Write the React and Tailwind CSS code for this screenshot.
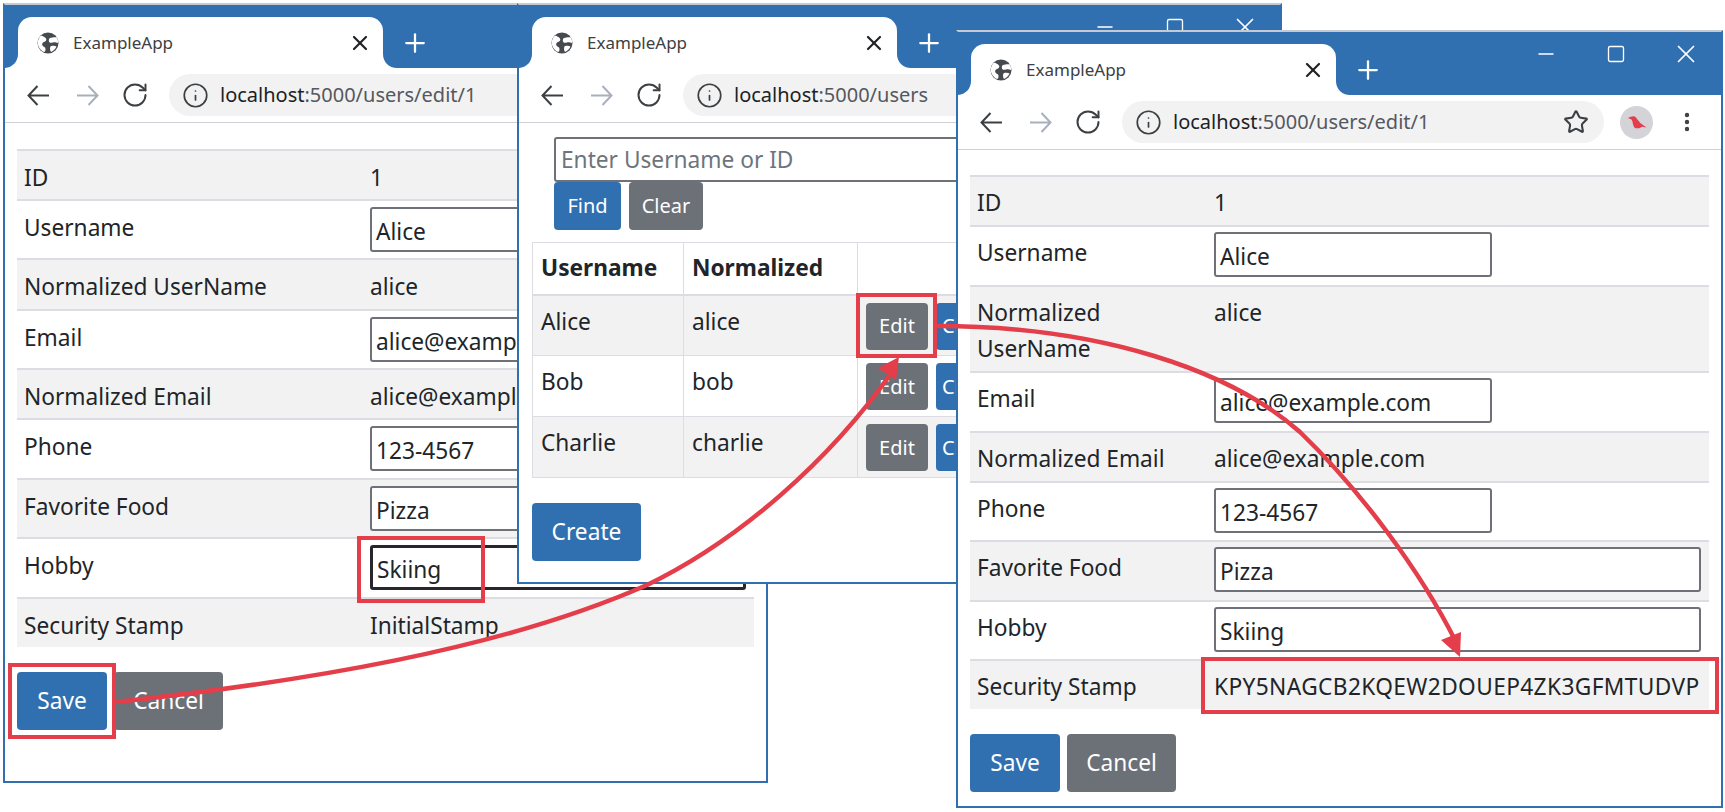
import { RotateCw, Info, Star, X, Plus, Minus, Square, MoreVertical } from "lucide-react";

function GlobeIcon() {
  return (
    <svg width="24" height="24" viewBox="0 0 24 24" className="shrink-0">
      <circle cx="12" cy="12" r="10.5" fill="#46494e" />
      <path d="M5 4.500c2 .5 4 1.500 5 3s-.5 3-2 3.500-2.500 2-1.500 3.500 3 1.500 3 3.500-.5 3-1.500 3C4 19 1.500 15 1.800 11c.2-2.500 1.500-5 3.200-6.500z" fill="#fff" />
      <path d="M14 7c2-.5 5-1 7-.5.800 1.500 1.200 3.500 1 5.500-1.500 0-3-1-5-.5s-3.500.500-4-1 0-3 1-3.500zM15 15c2-.5 4-.5 5.500.5-1 2.500-3 4.500-5.500 5.500-1-1.500-1.500-5 0-6z" fill="#fff" />
    </svg>
  );
}

function BirdIcon() {
  return (
    <div className="w-[33px] h-[33px] rounded-full bg-[#d3d3d8] flex items-center justify-center">
      <svg width="20" height="15" viewBox="0 0 24 17">
        <path d="M1 3L4.500 1.500 8 1C10 1 11 3 12.500 5L16 9 20 12 23.500 14.500 18 13.500 15 15.500H10C8 14 7 11 6.500 7L5 4.500Z" fill="#e33e4a" />
      </svg>
    </div>
  );
}

function NavArrow({ back }) {
  return (
    <svg width="27" height="27" viewBox="0 0 27 27" fill="none" strokeWidth="2" stroke={back ? "#3c4043" : "#a9b0bd"} className="shrink-0">
      <path d={back ? "M24 13.500H3.500M12.500 4L3.500 13.500L12.500 23" : "M3 13.500H23.500M14.500 4L23.500 13.500L14.500 23"} />
    </svg>
  );
}

function Tab() {
  return (
    <div className="relative w-[365px] h-[51px] bg-white rounded-t-[14px] flex items-center pl-[18px] pr-[11px] gap-[13px] text-[17px] text-[#3c4043]">
      <svg width="14" height="14" viewBox="0 0 14 14" className="absolute -left-[14px] bottom-0">
        <path d="M14 0v14H0C8 14 14 8 14 0z" fill="#fff" />
      </svg>
      <GlobeIcon />
      <span className="flex-1">ExampleApp</span>
      <X size={24} strokeWidth={2.2} color="#202124" />
      <svg width="14" height="14" viewBox="0 0 14 14" className="absolute -right-[14px] bottom-0">
        <path d="M0 0v14h14C6 14 0 8 0 0z" fill="#fff" />
      </svg>
    </div>
  );
}

function Toolbar({ url }) {
  return (
    <div className="h-[55px] flex items-center border-b border-[#d0d0d6] pl-[20px]">
      <NavArrow back />
      <div className="ml-[22px]"><NavArrow /></div>
      <RotateCw size={28} strokeWidth={1.7} color="#3c4043" className="ml-[20px] shrink-0" />
      <div className="ml-[20px] w-[482px] h-[42px] rounded-full bg-[#f2f2f2] flex items-center pl-[13px] pr-[15px] text-[20px] text-[#55585e] shrink-0">
        <Info size={27} strokeWidth={1.5} color="#3c4043" />
        <span className="ml-[11px] flex-1 whitespace-nowrap"><span className="text-[#202124]">localhost</span>{url}</span>
        <Star size={26} strokeWidth={1.9} color="#3c4043" />
      </div>
      <div className="ml-[16px] shrink-0"><BirdIcon /></div>
      <MoreVertical size={24} strokeWidth={2.4} color="#3c4043" className="ml-[22px] shrink-0" />
    </div>
  );
}

function Window({ className, url, children }) {
  return (
    <div className={`absolute border-2 border-[#3070b0] border-t-[#c4c9d2] bg-white overflow-hidden ${className}`}>
      <div className="relative h-[63px] bg-[#3070b0] flex items-end pl-[13px]">
        <Tab />
        <Plus size={30} strokeWidth={1.8} color="#fff" className="ml-[17px] mb-[10px]" />
        <div className="absolute right-0 top-[7px] h-[26px] w-[210px] grid grid-cols-3 items-center justify-items-center">
          <Minus size={24} strokeWidth={1.5} color="#fff" />
          <Square size={20} strokeWidth={1.6} color="#fff" />
          <X size={30} strokeWidth={1.4} color="#fff" />
        </div>
      </div>
      <Toolbar url={url} />
      {children}
    </div>
  );
}

function Field({ value, wide, focused }) {
  const cls = focused ? "border-[3px] border-[#26262c]" : "border-2 border-[#6f7178]";
  return (
    <div className={`h-[45px] rounded-[3px] bg-white flex items-center pl-[4px] pt-[4px] ${cls} ${wide ? "w-full" : "w-[278px]"}`}>
      {value}
    </div>
  );
}

function Row({ label, odd, children, height }) {
  return (
    <tr className={`border-t-2 border-[#dcdce2] align-top ${odd ? "bg-[#f2f2f2]" : ""}`} style={{ height }}>
      <td className="pl-[7px] pt-[9px]">{label}</td>
      <td className="pl-[8px] pr-[8px] pt-[9px]">{children}</td>
    </tr>
  );
}

function InputCell({ children }) {
  return <div className="-mt-[3px]">{children}</div>;
}

function UserForm({ className, colClass, wideAll, focusHobby, stamp, heights }) {
  const wide = wideAll;
  return (
    <div className={`px-[12px] text-[22.7px] leading-[36px] text-[#212529] ${className}`}>
      <table className="w-full table-fixed border-collapse">
        <colgroup>
          <col className={colClass} />
          <col />
        </colgroup>
        <tbody>
          <Row label="ID" odd height={heights[0]}>1</Row>
          <Row label="Username" height={heights[1]}><InputCell><Field value="Alice" wide={wide} /></InputCell></Row>
          <Row label="Normalized UserName" odd height={heights[2]}>alice</Row>
          <Row label="Email" height={heights[3]}><InputCell><Field value="alice@example.com" wide={wide} /></InputCell></Row>
          <Row label="Normalized Email" odd height={heights[4]}>alice@example.com</Row>
          <Row label="Phone" height={heights[5]}><InputCell><Field value="123-4567" wide={wide} /></InputCell></Row>
          <Row label="Favorite Food" odd height={heights[6]}><InputCell><Field value="Pizza" wide /></InputCell></Row>
          <Row label="Hobby" height={heights[7]}><InputCell><Field value="Skiing" wide focused={focusHobby} /></InputCell></Row>
          <Row label="Security Stamp" odd height={heights[8]}>{stamp}</Row>
        </tbody>
      </table>
      <div className="flex mt-[25px] gap-[7px]">
        <button className="w-[90px] h-[58px] rounded-[4px] bg-[#3070b0] text-white">Save</button>
        <button className="w-[109px] h-[58px] rounded-[4px] bg-[#6c7077] text-white">Cancel</button>
      </div>
    </div>
  );
}

const usersRows = [
  ["Alice", "alice", "bg-[#f2f2f2]"],
  ["Bob", "bob", ""],
  ["Charlie", "charlie", "bg-[#f2f2f2]"],
];

function UserList() {
  return (
    <div className="px-[13px] text-[22.7px] text-[#212529]">
      <div className="ml-[22px] mt-[14px] h-[45px] w-[690px] border-2 border-[#6f7178] rounded-[3px] flex items-center pl-[5px] pt-[2px] text-[#6c757d]">
        Enter Username or ID
      </div>
      <div className="ml-[22px] flex gap-[8px] text-[20px] text-white">
        <button className="w-[67px] h-[48px] rounded-[4px] bg-[#3070b0]">Find</button>
        <button className="w-[74px] h-[48px] rounded-[4px] bg-[#6c7077]">Clear</button>
      </div>
      <table className="mt-[12px] w-[735px] table-fixed border-collapse border border-[#dcdce2]">
        <colgroup>
          <col className="w-[151px]" />
          <col className="w-[174px]" />
          <col />
        </colgroup>
        <thead>
          <tr className="h-[52px] border-b-2 border-[#dcdce2] text-left">
            <th className="pl-[8px] font-bold border-r border-[#dcdce2]">Username</th>
            <th className="pl-[8px] font-bold border-r border-[#dcdce2]">Normalized</th>
            <th />
          </tr>
        </thead>
        <tbody>
          {usersRows.map(([name, norm, bg]) => (
            <tr key={name} className={`h-[61px] border-b border-[#dcdce2] align-top ${bg}`}>
              <td className="pl-[8px] pt-[9px] border-r border-[#dcdce2]">{name}</td>
              <td className="pl-[8px] pt-[9px] border-r border-[#dcdce2]">{norm}</td>
              <td className="pl-[8px] pt-[7px]">
                <div className="flex gap-[8px] text-[20px] text-white">
                  <button className="w-[62px] h-[47px] rounded-[4px] bg-[#6c7077]">Edit</button>
                  <button className="w-[84px] h-[47px] rounded-[4px] bg-[#3070b0]">Change</button>
                </div>
              </td>
            </tr>
          ))}
        </tbody>
      </table>
      <button className="mt-[25px] w-[109px] h-[58px] rounded-[4px] bg-[#3070b0] text-white">Create</button>
    </div>
  );
}

function Callouts() {
  return (
    <>
      <div className="absolute left-[357px] top-[536px] w-[128px] h-[67px] border-4 border-[#e33e4a]" />
      <div className="absolute left-[8px] top-[663px] w-[108px] h-[76px] border-4 border-[#e33e4a]" />
      <div className="absolute left-[856px] top-[293px] w-[81px] h-[65px] border-4 border-[#e33e4a]" />
      <div className="absolute left-[1201px] top-[657px] w-[518px] h-[57px] border-4 border-[#e33e4a]" />
      <svg width="1725" height="812" className="absolute left-0 top-0 pointer-events-none">
        <path d="M116 702C300 682 500 650 647 585C740 540 830 460 892 372" fill="none" stroke="#e33e4a" strokeWidth="4.500" />
        <path d="M899 357L878 368L896 380Z" fill="#e33e4a" />
        <path d="M937 326C1100 326 1230 370 1300 432C1360 490 1420 570 1456 642" fill="none" stroke="#e33e4a" strokeWidth="4.500" />
        <path d="M1460 657L1441 640L1461 632Z" fill="#e33e4a" />
      </svg>
    </>
  );
}

export default function App() {
  return (
    <div className="relative w-[1725px] h-[812px] bg-white overflow-hidden" style={{ fontFamily: '"Noto Sans", sans-serif' }}>
      <Window className="left-[3px] top-[3px] w-[765px] h-[780px]" url=":5000/users/edit/1">
        <UserForm
          className="pt-[26px]"
          colClass="w-[345px]"
          wideAll
          focusHobby
          stamp={<span className="whitespace-nowrap">InitialStamp</span>}
          heights={[50, 59, 51, 59, 50, 60, 59, 60, 49]}
        />
      </Window>
      <Window className="left-[517px] top-[3px] w-[765px] h-[581px]" url=":5000/users">
        <UserList />
      </Window>
      <Window className="left-[956px] top-[30px] w-[767px] h-[778px]" url=":5000/users/edit/1">
        <UserForm
          className="pt-[25px] [&_td]:pt-[8px]"
          colClass="w-[236px]"
          stamp={<span className="whitespace-nowrap tracking-[0.38px]">KPY5NAGCB2KQEW2DOUEP4ZK3GFMTUDVP</span>}
          heights={[50, 60, 86, 60, 50, 59, 60, 59, 49]}
        />
      </Window>
      <Callouts />
    </div>
  );
}
